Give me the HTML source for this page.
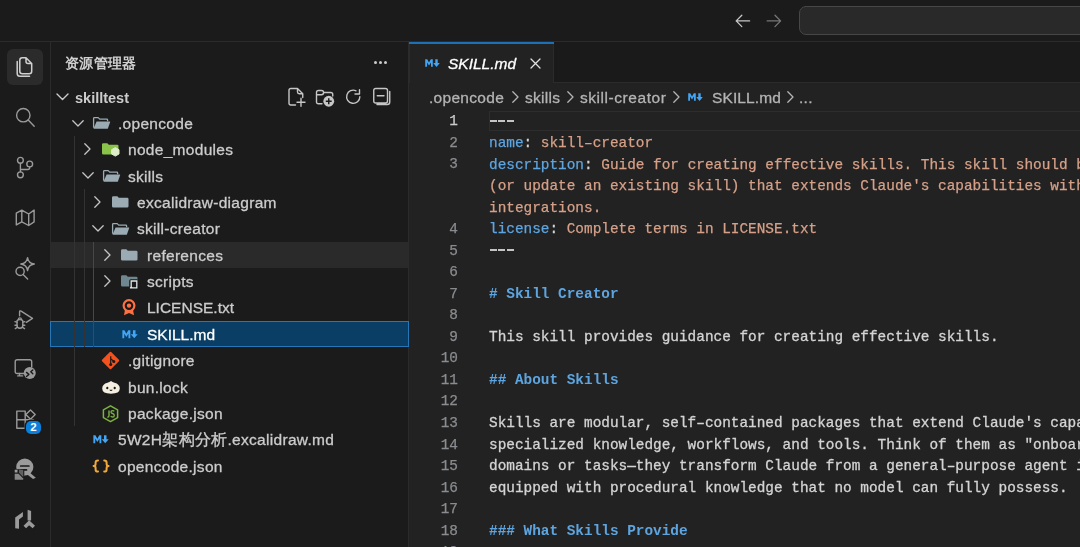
<!DOCTYPE html><html><head><meta charset="utf-8"><style>
*{margin:0;padding:0;box-sizing:border-box}
html,body{width:1080px;height:547px;overflow:hidden;background:#1b1b1b}
body{position:relative;font-family:"Liberation Sans",sans-serif;color:#cccccc}
.abs{position:absolute}
svg{position:absolute;overflow:visible}
.lbl,.code,.ln{will-change:transform}
#title{left:0;top:0;width:1080px;height:42px;background:#1b1b1b;border-bottom:1px solid #2b2b2b}
#act{left:0;top:42px;width:51px;height:505px;background:#1b1b1b;border-right:1px solid #2b2b2b}
#side{left:51px;top:42px;width:358px;height:505px;background:#1b1b1b;border-right:1px solid #2b2b2b}
#editor{left:409px;top:42px;width:671px;height:505px;background:#222222}
.lbl{position:absolute;font-size:15.5px;letter-spacing:0.3px;white-space:nowrap;color:#cccccc;line-height:18px;-webkit-text-stroke:0.3px currentColor}
.code{position:absolute;left:489px;font-family:"Liberation Mono",monospace;font-size:14.4px;line-height:21.5px;height:21.5px;white-space:pre;color:#d4d4d4;-webkit-text-stroke:0.3px #d4d4d4}
.dash{display:inline-block;width:25.5px;height:0;border-top:2px dashed #c8c8c8;vertical-align:middle}
.ln{position:absolute;left:410px;width:48px;text-align:right;font-family:"Liberation Mono",monospace;font-size:14.4px;line-height:21.5px;color:#8a8c8f;-webkit-text-stroke:0.25px currentColor}
.k{color:#5ea5e0;-webkit-text-stroke:0.25px #5ea5e0}.s{color:#d6a088;-webkit-text-stroke:0.25px #d6a088}.h{color:#5ea5e0;font-weight:bold;-webkit-text-stroke:0}
</style></head><body>
<div id="title" class="abs"></div><div id="act" class="abs"></div><div id="side" class="abs"></div><div id="editor" class="abs"></div>
<svg style="left:735px;top:13.5px" width="16" height="14" viewBox="0 0 16 14"><path d="M1.2 6.9 H14.6 M6.8 1.2 L1.2 6.9 L6.8 12.6" fill="none" stroke="#c8c8c8" stroke-width="1.3" stroke-linecap="round" stroke-linejoin="round"/></svg>
<svg style="left:766px;top:13.5px" width="16" height="14" viewBox="0 0 16 14"><path d="M1.2 6.9 H14.6 M9 1.2 L14.6 6.9 L9 12.6" fill="none" stroke="#777777" stroke-width="1.3" stroke-linecap="round" stroke-linejoin="round"/></svg>
<div class="abs" style="left:799px;top:6px;width:320px;height:29px;border:1.5px solid #474747;border-radius:7px;background:#292929"></div>
<div class="abs" style="left:7px;top:49px;width:36px;height:36px;border-radius:6px;background:#2b2b2b"></div>
<svg style="left:10px;top:52px" width="30" height="30" viewBox="0 0 30 30"><path d="M7.2 9.5 V21.5 Q7.2 24.3 10 24.3 H19.5" fill="none" stroke="#d0d0d0" stroke-width="1.5" stroke-linecap="round"/><path d="M12.3 5.8 H25.8 L31.7 11.7 V19.2 Q31.7 21.7 29.2 21.7 H12.3 Q9.8 21.7 9.8 19.2 V8.3 Q9.8 5.8 12.3 5.8 Z" transform="translate(0,0)" fill="none" stroke="#d0d0d0" stroke-width="0"/><path d="M12.3 5.8 H16 L21.7 11.5 V19.2 Q21.7 21.7 19.2 21.7 H12.3 Q9.8 21.7 9.8 19.2 V8.3 Q9.8 5.8 12.3 5.8 Z M16 5.8 V9.5 Q16 11.5 18 11.5 H21.7" fill="none" stroke="#d0d0d0" stroke-width="1.5" stroke-linejoin="round"/></svg>
<svg style="left:15px;top:108px" width="22" height="22" viewBox="0 0 22 22"><circle cx="8.3" cy="7.2" r="6.7" fill="none" stroke="#9a9a9a" stroke-width="1.4" stroke-linecap="round" stroke-linejoin="round"/><path d="M13.2 12.1 L19.2 18.3" fill="none" stroke="#9a9a9a" stroke-width="1.4" stroke-linecap="round" stroke-linejoin="round"/></svg>
<svg style="left:15px;top:158px" width="22" height="22" viewBox="0 0 22 22"><circle cx="5.4" cy="2.3" r="2.9" fill="none" stroke="#9a9a9a" stroke-width="1.4" stroke-linecap="round" stroke-linejoin="round"/><circle cx="5.4" cy="16.8" r="2.9" fill="none" stroke="#9a9a9a" stroke-width="1.4" stroke-linecap="round" stroke-linejoin="round"/><circle cx="14.7" cy="6" r="2.9" fill="none" stroke="#9a9a9a" stroke-width="1.4" stroke-linecap="round" stroke-linejoin="round"/><path d="M5.4 5.2 V13.9 M14.7 8.9 V9.5 Q14.7 11.5 12.7 11.5 H5.4" fill="none" stroke="#9a9a9a" stroke-width="1.4" stroke-linecap="round" stroke-linejoin="round"/></svg>
<svg style="left:15px;top:208px" width="22" height="22" viewBox="0 0 22 22"><path d="M1.3 5.1 L6.8 2.1 L13.7 6 L19.1 2.1 V13.9 L13.7 17.5 L6.8 13.9 L1.3 16.9 Z M6.8 2.1 V13.9 M13.7 6 V17.5" fill="none" stroke="#9a9a9a" stroke-width="1.4" stroke-linecap="round" stroke-linejoin="round"/></svg>
<svg style="left:14px;top:257px" width="24" height="24" viewBox="0 0 24 24"><path d="M13.55 0.6 Q14.3 6.2 20.3 7 Q14.3 7.8 13.55 13.6 Q12.8 7.8 6.8 7 Q12.8 6.2 13.55 0.6 Z" fill="none" stroke="#9a9a9a" stroke-width="1.4" stroke-linecap="round" stroke-linejoin="round"/><circle cx="6.1" cy="14.4" r="4.1" fill="none" stroke="#9a9a9a" stroke-width="1.4" stroke-linecap="round" stroke-linejoin="round"/><path d="M9.1 17.6 L13.6 22" fill="none" stroke="#9a9a9a" stroke-width="1.4" stroke-linecap="round" stroke-linejoin="round"/></svg>
<svg style="left:14px;top:309px" width="24" height="24" viewBox="0 0 24 24"><path d="M5.6 6.8 V3 Q5.6 1.3 7.1 2.2 L18.5 9.3 L12.3 13.3" fill="none" stroke="#9a9a9a" stroke-width="1.4" stroke-linecap="round" stroke-linejoin="round"/><path d="M3 12.3 Q3 10.6 5.9 10.6 Q8.8 10.6 8.8 12.3 V16.2 Q8.8 19.3 5.9 19.3 Q3 19.3 3 16.2 Z" fill="none" stroke="#9a9a9a" stroke-width="1.4" stroke-linecap="round" stroke-linejoin="round"/><path d="M1 12.6 L3 13.2 M1 16.2 H3 M1.3 19.6 L3.3 18.2 M10.8 12.6 L8.8 13.2 M10.8 16.2 H8.8 M10.5 19.6 L8.5 18.2 M4.4 10.6 Q4.4 8.9 5.9 8.9 Q7.4 8.9 7.4 10.6" fill="none" stroke="#9a9a9a" stroke-width="1.4" stroke-linecap="round" stroke-linejoin="round"/></svg>
<svg style="left:14px;top:359px" width="24" height="24" viewBox="0 0 24 24"><path d="M10 14.5 H3.2 Q1.2 14.5 1.2 12.5 V2.8 Q1.2 0.8 3.2 0.8 H15.7 Q17.7 0.8 17.7 2.8 V8" fill="none" stroke="#9a9a9a" stroke-width="1.4" stroke-linecap="round" stroke-linejoin="round"/><path d="M5.5 14.5 V16.8 M3.7 16.9 H8.6" fill="none" stroke="#9a9a9a" stroke-width="1.4" stroke-linecap="round" stroke-linejoin="round"/><circle cx="15.75" cy="13.9" r="6" fill="#9a9a9a"/><path d="M12.5 13.4 L14.9 15.4 L12.5 17.5 M18.8 10.9 L16.8 12.8 L18.8 14.7" fill="none" stroke="#1a1a1a" stroke-width="1.4" stroke-linecap="round" stroke-linejoin="round"/></svg>
<svg style="left:14px;top:409px" width="24" height="24" viewBox="0 0 24 24"><path d="M2.8 2.1 H11.2 V10.8 H2.8 Z M2.8 10.8 H11.2 V19.2 H2.8 Z M11.2 10.8 H19.5 V19.2 H11.2 Z M16.5 0.9 L21.2 5.6 L16.5 10.3 L11.8 5.6 Z" fill="none" stroke="#9a9a9a" stroke-width="1.4" stroke-linecap="round" stroke-linejoin="round"/></svg>
<div class="abs" style="left:26px;top:420.5px;width:15px;height:13.5px;border-radius:5px;background:#0c7fd8;box-shadow:0 0 0 1.5px #1a1a1a;color:#fff;font-size:11.5px;font-weight:bold;line-height:13.5px;text-align:center">2</div>
<svg style="left:14px;top:458px" width="24" height="24" viewBox="0 0 24 24"><circle cx="10.8" cy="9" r="8.6" fill="#9a9a9a"/><path d="M14.5 13.5 L21.8 19.8 L19 21 L12 15.5 Z" fill="#9a9a9a"/><path d="M6.7 8 H14.9 M7.2 11.9 H12.5" stroke="#1a1a1a" stroke-width="1.7" stroke-linecap="round"/><path d="M0 11.2 H9.7 V24 H0 Z" fill="#1a1a1a"/><path d="M9.7 11.9 V17" stroke="#1a1a1a" stroke-width="1.2"/><rect x="0.7" y="11.7" width="2.8" height="2.8" fill="#9a9a9a"/><path d="M0.7 15.8 H4.5 L9.2 20.5 V21.8 H0.7 Z" fill="#9a9a9a" opacity="0.85"/><path d="M5 11.7 H9.2 V19 L5 14.8 Z" fill="#9a9a9a" opacity="0.55"/></svg>
<svg style="left:14px;top:509px" width="24" height="24" viewBox="0 0 24 24"><path d="M1.2 8.5 L8.9 3 V7.5 L5 10.5 V19.7 L1.2 19.2 Z" fill="#9a9a9a"/><path d="M13.6 0.8 L17.1 2 V11.5 H13.6 Z" fill="#9a9a9a"/><path d="M10.8 18 L15.2 13.8 L19.8 18" fill="none" stroke="#9a9a9a" stroke-width="3.6" stroke-linejoin="miter"/></svg>
<div class="abs" style="left:64.6px;top:54px;font-size:14px;font-weight:bold;color:#d0d0d0;line-height:18px;letter-spacing:0.35px;will-change:transform">资源管理器</div>
<div class="abs" style="left:374.4px;top:61.3px;width:3px;height:3px;border-radius:2px;background:#cccccc"></div>
<div class="abs" style="left:379.2px;top:61.3px;width:3px;height:3px;border-radius:2px;background:#cccccc"></div>
<div class="abs" style="left:384.0px;top:61.3px;width:3px;height:3px;border-radius:2px;background:#cccccc"></div>
<svg style="left:56px;top:93px" width="13" height="8" viewBox="0 0 13 8"><path d="M1 1 L6.5 6.5 L12 1" fill="none" stroke="#cccccc" stroke-width="1.4" stroke-linecap="round" stroke-linejoin="round"/></svg>
<div class="lbl" style="left:74.5px;top:88.5px;font-weight:bold;font-size:14.5px;letter-spacing:0px;-webkit-text-stroke:0">skilltest</div>
<svg style="left:288px;top:88px" width="19" height="19" viewBox="0 0 19 19"><path d="M7.5 17 H2.8 Q1 17 1 15.2 V2.3 Q1 0.5 2.8 0.5 H9.5 L14.75 5.75 V9.5 M9.5 0.5 V4 Q9.5 5.75 11.25 5.75 H14.75 M13 10.3 V18.3 M9 14.3 H17" fill="none" stroke="#c6c6c6" stroke-width="1.4" stroke-linecap="round" stroke-linejoin="round"/></svg>
<svg style="left:315px;top:88px" width="20" height="19" viewBox="0 0 20 19"><path d="M7 15.75 H3.5 Q1.5 15.75 1.5 13.75 V4.5 Q1.5 2.5 3.5 2.5 H6.5 Q8.6 2.5 8.6 4.6 Q8.6 6.75 6.5 6.75 H1.5 M8.6 4.5 H15.75 Q17.75 4.5 17.75 6.5 V8" fill="none" stroke="#c6c6c6" stroke-width="1.4" stroke-linecap="round" stroke-linejoin="round"/><circle cx="13.75" cy="13.25" r="5.4" fill="#c6c6c6"/><path d="M13.75 10.3 V16.2 M10.8 13.25 H16.7" stroke="#1a1a1a" stroke-width="1.5"/></svg>
<svg style="left:345px;top:89px" width="17" height="17" viewBox="0 0 17 17"><path d="M14.85 7.75 A6.6 6.6 0 1 1 11.04 1.77" fill="none" stroke="#c6c6c6" stroke-width="1.4" stroke-linecap="round" stroke-linejoin="round"/><path d="M10 5 H14.5 V0.8" fill="none" stroke="#c6c6c6" stroke-width="1.4" stroke-linecap="round" stroke-linejoin="round"/></svg>
<svg style="left:373px;top:88px" width="19" height="19" viewBox="0 0 19 19"><path d="M2.75 0.5 H12.5 Q14.5 0.5 14.5 2.5 V13 Q14.5 15 12.5 15 H2.75 Q0.75 15 0.75 13 V2.5 Q0.75 0.5 2.75 0.5 Z M4.25 7.75 H11 M16.75 3.5 V14 Q16.75 16.5 14.25 16.5 H4" fill="none" stroke="#c6c6c6" stroke-width="1.4" stroke-linecap="round" stroke-linejoin="round"/></svg>
<div class="abs" style="left:51px;top:241.70px;width:357px;height:26.36px;background:#2a2a2a"></div>
<div class="abs" style="left:50px;top:320.78px;width:358.5px;height:26.36px;background:#0a3e65;border:1px solid #2676b8"></div>
<div class="abs" style="left:74px;top:136.26px;width:1px;height:289.96px;background:#333333"></div>
<div class="abs" style="left:84px;top:188.98px;width:1px;height:158.16px;background:#333333"></div>
<div class="abs" style="left:93.4px;top:241.70px;width:1px;height:105.44px;background:#474747"></div>
<svg style="left:72px;top:119.58000000000001px" width="12" height="7" viewBox="0 0 12 7"><path d="M0.8 0.8 L6 6 L11.2 0.8" fill="none" stroke="#c4c4c4" stroke-width="1.3" stroke-linecap="round" stroke-linejoin="round"/></svg>
<svg style="left:91.8px;top:116.08000000000001px" width="18" height="14" viewBox="0 0 18 14"><path d="M1.6 11.8 V2.4 Q1.6 1.6 2.4 1.6 H6.2 L7.7 3.1 H14.8 Q15.6 3.1 15.6 3.9 V5.2" fill="none" stroke="#9aabb3" stroke-width="1.3" stroke-linejoin="round"/><path d="M4.6 5.4 H17.8 Q18.4 5.4 18.2 6 L15.9 12.4 Q15.7 12.8 15.2 12.8 H2 Q1.4 12.8 1.6 12.2 Z" fill="#9aabb3"/></svg>
<div class="lbl" style="left:118.3px;top:114.90px;color:#cccccc">.opencode</div>
<svg style="left:84.0px;top:143.44px" width="7" height="12" viewBox="0 0 7 12"><path d="M0.8 0.8 L6 6 L0.8 11.2" fill="none" stroke="#c4c4c4" stroke-width="1.3" stroke-linecap="round" stroke-linejoin="round"/></svg>
<svg style="left:101.0px;top:142.44px" width="18" height="14" viewBox="0 0 18 14"><path d="M1 2.6 Q1 1.2 2.4 1.2 H6.3 L7.8 2.8 H16.2 Q17.5 2.8 17.5 4.1 V11.2 Q17.5 12.6 16.2 12.6 H2.4 Q1 12.6 1 11.2 Z" fill="#8bc34a"/><path d="M14.3 5.6 L18 7.7 V12 L14.3 14.1 L10.6 12 V7.7 Z" fill="#dcedc8" stroke="#dcedc8" stroke-width="1" stroke-linejoin="round"/></svg>
<div class="lbl" style="left:127.5px;top:141.26px;color:#cccccc">node_modules</div>
<svg style="left:81.5px;top:172.3px" width="12" height="7" viewBox="0 0 12 7"><path d="M0.8 0.8 L6 6 L11.2 0.8" fill="none" stroke="#c4c4c4" stroke-width="1.3" stroke-linecap="round" stroke-linejoin="round"/></svg>
<svg style="left:101.8px;top:168.8px" width="18" height="14" viewBox="0 0 18 14"><path d="M1.6 11.8 V2.4 Q1.6 1.6 2.4 1.6 H6.2 L7.7 3.1 H14.8 Q15.6 3.1 15.6 3.9 V5.2" fill="none" stroke="#9aabb3" stroke-width="1.3" stroke-linejoin="round"/><path d="M4.6 5.4 H17.8 Q18.4 5.4 18.2 6 L15.9 12.4 Q15.7 12.8 15.2 12.8 H2 Q1.4 12.8 1.6 12.2 Z" fill="#9aabb3"/></svg>
<div class="lbl" style="left:127.5px;top:167.62px;color:#cccccc">skills</div>
<svg style="left:94.0px;top:196.16000000000003px" width="7" height="12" viewBox="0 0 7 12"><path d="M0.8 0.8 L6 6 L0.8 11.2" fill="none" stroke="#c4c4c4" stroke-width="1.3" stroke-linecap="round" stroke-linejoin="round"/></svg>
<svg style="left:110.8px;top:195.16000000000003px" width="18" height="14" viewBox="0 0 18 14"><path d="M1 2.6 Q1 1.2 2.4 1.2 H6.3 L7.8 2.8 H16.2 Q17.5 2.8 17.5 4.1 V11.2 Q17.5 12.6 16.2 12.6 H2.4 Q1 12.6 1 11.2 Z" fill="#9aabb3"/></svg>
<div class="lbl" style="left:137.2px;top:193.98px;color:#cccccc">excalidraw-diagram</div>
<svg style="left:91.5px;top:225.02px" width="12" height="7" viewBox="0 0 12 7"><path d="M0.8 0.8 L6 6 L11.2 0.8" fill="none" stroke="#c4c4c4" stroke-width="1.3" stroke-linecap="round" stroke-linejoin="round"/></svg>
<svg style="left:110.8px;top:221.52px" width="18" height="14" viewBox="0 0 18 14"><path d="M1.6 11.8 V2.4 Q1.6 1.6 2.4 1.6 H6.2 L7.7 3.1 H14.8 Q15.6 3.1 15.6 3.9 V5.2" fill="none" stroke="#9aabb3" stroke-width="1.3" stroke-linejoin="round"/><path d="M4.6 5.4 H17.8 Q18.4 5.4 18.2 6 L15.9 12.4 Q15.7 12.8 15.2 12.8 H2 Q1.4 12.8 1.6 12.2 Z" fill="#9aabb3"/></svg>
<div class="lbl" style="left:137.2px;top:220.34px;color:#cccccc">skill-creator</div>
<svg style="left:103.5px;top:248.88000000000002px" width="7" height="12" viewBox="0 0 7 12"><path d="M0.8 0.8 L6 6 L0.8 11.2" fill="none" stroke="#c4c4c4" stroke-width="1.3" stroke-linecap="round" stroke-linejoin="round"/></svg>
<svg style="left:120.30000000000001px;top:247.88000000000002px" width="18" height="14" viewBox="0 0 18 14"><path d="M1 2.6 Q1 1.2 2.4 1.2 H6.3 L7.8 2.8 H16.2 Q17.5 2.8 17.5 4.1 V11.2 Q17.5 12.6 16.2 12.6 H2.4 Q1 12.6 1 11.2 Z" fill="#9aabb3"/></svg>
<div class="lbl" style="left:146.6px;top:246.70px;color:#cccccc">references</div>
<svg style="left:103.5px;top:275.24px" width="7" height="12" viewBox="0 0 7 12"><path d="M0.8 0.8 L6 6 L0.8 11.2" fill="none" stroke="#c4c4c4" stroke-width="1.3" stroke-linecap="round" stroke-linejoin="round"/></svg>
<svg style="left:120.30000000000001px;top:274.24px" width="18" height="14" viewBox="0 0 18 14"><path d="M1 2.6 Q1 1.2 2.4 1.2 H6.3 L7.8 2.8 H16.2 Q17.5 2.8 17.5 4.1 V11.2 Q17.5 12.6 16.2 12.6 H2.4 Q1 12.6 1 11.2 Z" fill="#6f8791"/><rect x="9.2" y="5.2" width="9.2" height="10" rx="1.5" fill="#1a1a1a"/><path d="M11.2 7 H16.8 V13.8 H12.6 Q11.2 13.8 11.2 12.4 Z M11.2 12.4 Q11.2 13.8 9.9 13.8" fill="none" stroke="#e0e6e8" stroke-width="1.3"/></svg>
<div class="lbl" style="left:146.6px;top:273.06px;color:#cccccc">scripts</div>
<svg style="left:121.30000000000001px;top:298.79999999999995px" width="16" height="17" viewBox="0 0 16 17"><path d="M4.2 9.8 L3 16.3 L8 14 L13 16.3 L11.8 9.8 Z" fill="#ff7043"/><circle cx="8" cy="6.6" r="5.4" fill="#1a1a1a" stroke="#ff7043" stroke-width="2.2"/><circle cx="8" cy="6.6" r="2.2" fill="#ff7043"/></svg>
<div class="lbl" style="left:146.6px;top:299.42px;color:#cccccc;letter-spacing:0">LICENSE.txt</div>
<svg style="left:120.80000000000001px;top:328.76px" width="17" height="10.5" viewBox="0 0 16 10"><path d="M1.2 8.8 V1.3 H3.2 L5 4.6 L6.8 1.3 H8.8 V8.8 H7 V4.6 L5 7.6 L3 4.6 V8.8 Z" fill="#42a5f5"/><path d="M11.3 1.2 H13.7 V4.9 H15.8 L12.5 8.9 L9.2 4.9 H11.3 Z" fill="#42a5f5"/></svg>
<div class="lbl" style="left:146.6px;top:325.78px;color:#ffffff;letter-spacing:0">SKILL.md</div>
<svg style="left:102.3px;top:351.82px" width="17" height="17" viewBox="0 0 17 17"><path d="M8.5 0.8 L16.2 8.5 L8.5 16.2 L0.8 8.5 Z" fill="#f4511e" stroke="#f4511e" stroke-width="2" stroke-linejoin="round"/><path d="M8.7 4.2 V12.8 M8.7 6.6 L11.6 9.2" stroke="#1a1a1a" stroke-width="1.2" fill="none"/><circle cx="8.7" cy="12.5" r="1.5" fill="#1a1a1a"/><circle cx="11.8" cy="9.4" r="1.5" fill="#1a1a1a"/></svg>
<div class="lbl" style="left:127.5px;top:352.14px;color:#cccccc">.gitignore</div>
<svg style="left:101.8px;top:378.68px" width="18" height="16" viewBox="0 0 18 16"><path d="M9 2 Q10.5 3.2 12.5 3.7 Q17.8 5 17.8 9.6 Q17.8 14.8 9 14.8 Q0.2 14.8 0.2 9.6 Q0.2 5 5.5 3.7 Q7.5 3.2 9 2 Z" fill="#f5efe0"/><ellipse cx="5.3" cy="9" rx="1.1" ry="1.2" fill="#1a1a1a"/><ellipse cx="12.7" cy="9" rx="1.1" ry="1.2" fill="#1a1a1a"/><path d="M7.3 10.8 Q9 13.3 10.7 10.8 Z" fill="#1a1a1a"/></svg>
<div class="lbl" style="left:127.5px;top:378.50px;color:#cccccc">bun.lock</div>
<svg style="left:102.3px;top:404.54px" width="17" height="17" viewBox="0 0 17 17"><path d="M8.5 0.8 L15.6 4.8 V12.6 L8.5 16.6 L1.4 12.6 V4.8 Z" fill="none" stroke="#7cb342" stroke-width="1.5" stroke-linejoin="round"/><path d="M7 5.5 V10.8 Q7 12.2 5.4 12.2" fill="none" stroke="#7cb342" stroke-width="1.4"/><path d="M12.2 6.4 Q11.8 5.6 10.6 5.6 Q9 5.6 9 7 Q9 8.2 10.6 8.5 Q12.3 8.9 12.3 10.4 Q12.3 12 10.6 12 Q9.2 12 8.8 11" fill="none" stroke="#7cb342" stroke-width="1.3"/></svg>
<div class="lbl" style="left:127.5px;top:404.86px;color:#cccccc">package.json</div>
<svg style="left:92.3px;top:434.20000000000005px" width="17" height="10.5" viewBox="0 0 16 10"><path d="M1.2 8.8 V1.3 H3.2 L5 4.6 L6.8 1.3 H8.8 V8.8 H7 V4.6 L5 7.6 L3 4.6 V8.8 Z" fill="#42a5f5"/><path d="M11.3 1.2 H13.7 V4.9 H15.8 L12.5 8.9 L9.2 4.9 H11.3 Z" fill="#42a5f5"/></svg>
<div class="lbl" style="left:118.3px;top:431.22px;color:#cccccc">5W2H架构分析.excalidraw.md</div>
<svg style="left:91.5px;top:457.76000000000005px" width="18" height="16" viewBox="0 0 18 16"><path d="M6 2.4 Q3.6 2.4 3.6 4.6 V6 Q3.6 8 1.6 8 Q3.6 8 3.6 10 V11.4 Q3.6 13.6 6 13.6 M12.2 2.4 Q14.6 2.4 14.6 4.6 V6 Q14.6 8 16.6 8 Q14.6 8 14.6 10 V11.4 Q14.6 13.6 12.2 13.6" fill="none" stroke="#f2a93b" stroke-width="2" stroke-linecap="round" stroke-linejoin="round"/></svg>
<div class="lbl" style="left:118.3px;top:457.58px;color:#cccccc">opencode.json</div>
<div class="abs" style="left:409px;top:42px;width:671px;height:41px;background:#1a1a1a;border-bottom:1px solid #2b2b2b"></div>
<div class="abs" style="left:409px;top:42px;width:145px;height:41px;background:#222222;border-left:1px solid #2b2b2b;border-right:1px solid #2b2b2b"></div>
<div class="abs" style="left:409px;top:42px;width:145px;height:1.5px;background:#1c70b8"></div>
<svg style="left:423.5px;top:58px" width="16" height="10" viewBox="0 0 16 10"><path d="M1.2 8.8 V1.3 H3.2 L5 4.6 L6.8 1.3 H8.8 V8.8 H7 V4.6 L5 7.6 L3 4.6 V8.8 Z" fill="#42a5f5"/><path d="M11.3 1.2 H13.7 V4.9 H15.8 L12.5 8.9 L9.2 4.9 H11.3 Z" fill="#42a5f5"/></svg>
<div class="lbl" style="left:448px;top:54.6px;font-style:italic;color:#ffffff;letter-spacing:0">SKILL.md</div>
<svg style="left:529.5px;top:57.5px" width="11" height="11" viewBox="0 0 11 11"><path d="M1 1 L10 10 M10 1 L1 10" fill="none" stroke="#e0e0e0" stroke-width="1.3" stroke-linecap="round"/></svg>
<div class="lbl" style="left:429px;top:89px;color:#b4b4b4;letter-spacing:0.3px">.opencode</div>
<svg style="left:511.8px;top:91px" width="7" height="12" viewBox="0 0 7 12"><path d="M0.8 0.8 L6 6 L0.8 11.2" fill="none" stroke="#b4b4b4" stroke-width="1.3" stroke-linecap="round" stroke-linejoin="round"/></svg>
<div class="lbl" style="left:524.5px;top:89px;color:#b4b4b4;letter-spacing:0.3px">skills</div>
<svg style="left:566.6px;top:91px" width="7" height="12" viewBox="0 0 7 12"><path d="M0.8 0.8 L6 6 L0.8 11.2" fill="none" stroke="#b4b4b4" stroke-width="1.3" stroke-linecap="round" stroke-linejoin="round"/></svg>
<div class="lbl" style="left:579.5px;top:89px;color:#b4b4b4;letter-spacing:0.55px">skill-creator</div>
<svg style="left:673px;top:91px" width="7" height="12" viewBox="0 0 7 12"><path d="M0.8 0.8 L6 6 L0.8 11.2" fill="none" stroke="#b4b4b4" stroke-width="1.3" stroke-linecap="round" stroke-linejoin="round"/></svg>
<svg style="left:687px;top:92px" width="16" height="10" viewBox="0 0 16 10"><path d="M1.2 8.8 V1.3 H3.2 L5 4.6 L6.8 1.3 H8.8 V8.8 H7 V4.6 L5 7.6 L3 4.6 V8.8 Z" fill="#42a5f5"/><path d="M11.3 1.2 H13.7 V4.9 H15.8 L12.5 8.9 L9.2 4.9 H11.3 Z" fill="#42a5f5"/></svg>
<div class="lbl" style="left:712px;top:89px;color:#b4b4b4;letter-spacing:0.1px">SKILL.md</div>
<svg style="left:787px;top:91px" width="7" height="12" viewBox="0 0 7 12"><path d="M0.8 0.8 L6 6 L0.8 11.2" fill="none" stroke="#b4b4b4" stroke-width="1.3" stroke-linecap="round" stroke-linejoin="round"/></svg>
<div class="lbl" style="left:799px;top:89px;color:#b4b4b4;letter-spacing:0.3px">...</div>
<div class="abs" style="left:489px;top:111px;width:600px;height:19.5px;border:1px solid #2d2d2d"></div>
<div class="ln" style="top:111.4px;color:#cccccc">1</div>
<div class="abs" style="left:489.5px;top:120.2px;width:7.2px;height:2px;background:#c4c4c4"></div><div class="abs" style="left:498px;top:120.2px;width:7.2px;height:2px;background:#c4c4c4"></div><div class="abs" style="left:506.6px;top:120.2px;width:7.2px;height:2px;background:#c4c4c4"></div>
<div class="ln" style="top:132.94px;color:#8a8c8f">2</div>
<div class="code" style="top:133.14px"><span class="k">name</span>: <span class="s">skill–creator</span></div>
<div class="ln" style="top:154.48px;color:#8a8c8f">3</div>
<div class="code" style="top:154.67999999999998px"><span class="k">description</span>: <span class="s">Guide for creating effective skills. This skill should be used when users want to create a new skill</span></div>
<div class="code" style="top:176.22px"><span class="s">(or update an existing skill) that extends Claude's capabilities with specialized knowledge, workflows, or tool</span></div>
<div class="code" style="top:197.76px"><span class="s">integrations.</span></div>
<div class="ln" style="top:219.1px;color:#8a8c8f">4</div>
<div class="code" style="top:219.29999999999998px"><span class="k">license</span>: <span class="s">Complete terms in LICENSE.txt</span></div>
<div class="ln" style="top:240.64000000000001px;color:#8a8c8f">5</div>
<div class="abs" style="left:489.5px;top:249.44px;width:7.2px;height:2px;background:#c4c4c4"></div><div class="abs" style="left:498px;top:249.44px;width:7.2px;height:2px;background:#c4c4c4"></div><div class="abs" style="left:506.6px;top:249.44px;width:7.2px;height:2px;background:#c4c4c4"></div>
<div class="ln" style="top:262.17999999999995px;color:#8a8c8f">6</div>
<div class="code" style="top:262.38px"></div>
<div class="ln" style="top:283.71999999999997px;color:#8a8c8f">7</div>
<div class="code" style="top:283.92px"><span class="h"># Skill Creator</span></div>
<div class="ln" style="top:305.26px;color:#8a8c8f">8</div>
<div class="code" style="top:305.46000000000004px"></div>
<div class="ln" style="top:326.79999999999995px;color:#8a8c8f">9</div>
<div class="code" style="top:327.0px">This skill provides guidance for creating effective skills.</div>
<div class="ln" style="top:348.34px;color:#8a8c8f">10</div>
<div class="code" style="top:348.54px"></div>
<div class="ln" style="top:369.88px;color:#8a8c8f">11</div>
<div class="code" style="top:370.08000000000004px"><span class="h">## About Skills</span></div>
<div class="ln" style="top:391.41999999999996px;color:#8a8c8f">12</div>
<div class="code" style="top:391.62px"></div>
<div class="ln" style="top:412.96px;color:#8a8c8f">13</div>
<div class="code" style="top:413.16px">Skills are modular, self–contained packages that extend Claude's capabilities by providing</div>
<div class="ln" style="top:434.49999999999994px;color:#8a8c8f">14</div>
<div class="code" style="top:434.7px">specialized knowledge, workflows, and tools. Think of them as "onboarding guides" for specific</div>
<div class="ln" style="top:456.03999999999996px;color:#8a8c8f">15</div>
<div class="code" style="top:456.24px">domains or tasks—they transform Claude from a general–purpose agent into a specialized agent</div>
<div class="ln" style="top:477.58px;color:#8a8c8f">16</div>
<div class="code" style="top:477.78000000000003px">equipped with procedural knowledge that no model can fully possess.</div>
<div class="ln" style="top:499.11999999999995px;color:#8a8c8f">17</div>
<div class="code" style="top:499.32px"></div>
<div class="ln" style="top:520.66px;color:#8a8c8f">18</div>
<div class="code" style="top:520.86px"><span class="h">### What Skills Provide</span></div>
<div class="ln" style="top:542.1999999999999px;color:#8a8c8f">19</div>
<div class="code" style="top:542.4px"></div>
</body></html>
